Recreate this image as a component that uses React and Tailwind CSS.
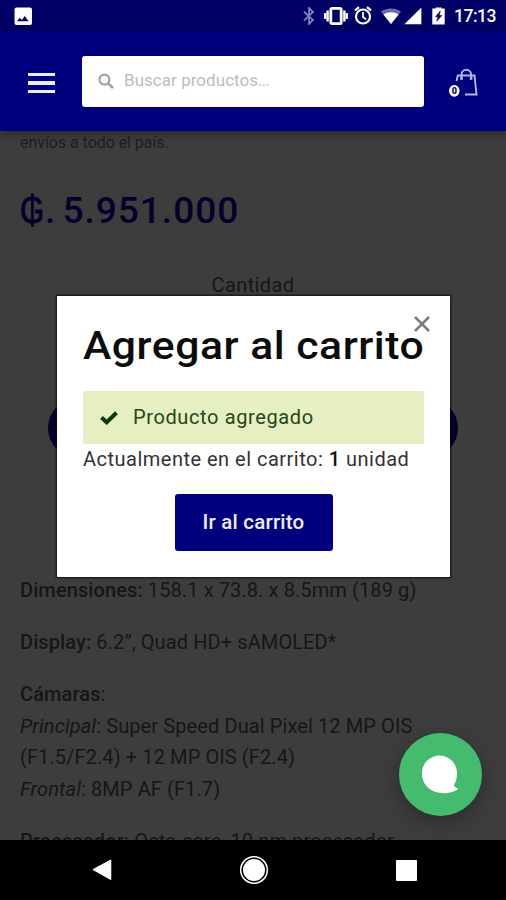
import React from "react";

function StatusBar() {
  return (
    <div className="flex h-[31px] shrink-0 items-center bg-[#000067] pl-[14px] pr-[10px] text-white">
      <svg className="h-[18px] w-[18px]" viewBox="0 0 18 18">
        <rect x="0.5" y="0.5" width="17.5" height="17.5" rx="2" fill="#fff" />
        <path d="M3 14.2 5.8 10.8 7.8 13 10.8 9 14.6 14.2z" fill="#000067" />
      </svg>
      <div className="ml-auto flex items-center">
        <svg className="h-[18px] w-[12px]" viewBox="0 0 12 18" fill="none" stroke="#8080b6" strokeWidth="1.8">
          <path d="M1 4.6 10 13 6 17V1l4 4-9 8.6" />
        </svg>
        <svg className="ml-[9px] h-[18px] w-[24px]" viewBox="0 0 24 18" fill="none" stroke="#fff">
          <rect x="6.8" y="1.4" width="10.4" height="15.2" rx="1.2" strokeWidth="2.8" />
          <path d="M3.6 3.5v11M20.4 3.5v11" strokeWidth="2.4" />
          <path d="M1.2 6v6M22.8 6v6" strokeWidth="2.2" />
        </svg>
        <svg className="ml-[6px] h-[19px] w-[18px]" viewBox="0 0 18 19" fill="none" stroke="#fff">
          <circle cx="9" cy="10.5" r="7" strokeWidth="2.2" />
          <path d="M9 6v5l3.2 2.4" strokeWidth="1.8" />
          <path d="M1 4.4 5 1.2M17 4.4 13 1.2" strokeWidth="2.2" />
        </svg>
        <svg className="ml-[9px] h-[18px] w-[20px]" viewBox="0 0 20 18">
          <path d="M0 4.6C6 .4 14 .4 20 4.6L10 17z" fill="#6c6cac" />
          <path d="M2.4 7.4C7 4.6 13 4.6 17.6 7.4L10 17z" fill="#fff" />
        </svg>
        <svg className="ml-[3px] h-[18px] w-[18px]" viewBox="0 0 18 18">
          <path d="M17.4.5V17.2H.4z" fill="#fff" />
        </svg>
        <svg className="ml-[10px] h-[18px] w-[13px]" viewBox="0 0 13 18">
          <path d="M.3 1.4H3.6V.6h5.800V1.400h3.300v16H.3z" fill="#fff" />
          <path d="M8.300 4 3.600 9.800h2.500L4.600 14.200l5.300-5.800H7.200z" fill="#000067" stroke="#000067" strokeWidth=".6" />
        </svg>
        <span className="ml-[9px] w-[42px] whitespace-nowrap text-[17.5px] font-medium leading-[20px] tracking-[-0.5px]">17:13</span>
      </div>
    </div>
  );
}

function Header() {
  return (
    <header className="relative flex h-[100px] shrink-0 items-center bg-[#00007e] pl-[28px] pr-[27px] shadow-[0_2px_10px_rgba(0,0,0,0.4)]">
      <button className="mt-1 flex w-[27px] flex-col gap-[5px]" aria-label="Menú">
        <span className="h-[3.5px] bg-[#ececff]" />
        <span className="h-[3.5px] bg-[#ececff]" />
        <span className="h-[3.5px] bg-[#ececff]" />
      </button>
      <div className="ml-[27px] flex h-[51px] w-[342px] items-center rounded-[3px] bg-white pl-[16px]">
        <svg className="h-[16px] w-[16px]" viewBox="0 0 16 16" fill="none" stroke="#a4a4a4" strokeWidth="2.2">
          <circle cx="6.4" cy="6.6" r="5" />
          <path d="M10 10.2 15 15" strokeWidth="2.6" />
        </svg>
        <span className="ml-[10px] whitespace-nowrap text-[17px] tracking-[0.04px] text-[#bcbcbc]">Buscar productos…</span>
      </div>
      <svg className="ml-auto mt-[3px] h-[30px] w-[30px]" viewBox="0 0 30 30" fill="none" stroke="#b4b4e6" strokeWidth="1.9">
        <path d="M7.500 13 8.800 7.500H25.500L27.500 26.500H16" />
        <path d="M12.500 11.500V6.500a4.800 4.800 0 0 1 9.600 0v5" />
        <path d="M11.300 10.500h2.600M20.800 10.500h2.600" strokeWidth="2.400" />
        <ellipse cx="5.300" cy="22.800" rx="5.300" ry="5.900" fill="#fff" stroke="none" />
        <text x="5.300" y="26" textAnchor="middle" fontSize="9" fontWeight="900" fill="#00007e" stroke="none">0</text>
      </svg>
    </header>
  );
}

function ProductPage() {
  return (
    <main className="flex h-[709px] shrink-0 flex-col overflow-hidden bg-[#3d3d3d] px-[20px] text-[#161616]">
      <p className="mt-[1px] text-[16px] leading-[22px] tracking-[-0.05px] text-[#1e1e1e]">envíos a todo el país.</p>
      <p className="mt-[34px] whitespace-nowrap text-[37px] font-medium leading-[46px] tracking-[1px] text-[#05002b] [word-spacing:-4px]">
        <span className="inline-block w-[25px] origin-left scale-x-[0.84] [-webkit-text-stroke:1px_#05002b]">₲</span>. 5.951.000
      </p>
      <p className="mt-[36px] text-center text-[20px] leading-[30px] tracking-[0.4px]">Cantidad</p>
      <div className="mx-[28px] mt-[98px] h-[60px] shrink-0 rounded-full bg-[#05002b]" />
      <div className="mt-[64px] h-px shrink-0 bg-[#3a3a3a]" />
      <div className="mt-[52px] whitespace-nowrap text-[20px] leading-[31.5px] tracking-[0.1px]">
        <p><b className="font-medium">Dimensiones:</b> 158.1 x 73.8. x 8.5mm (189 g)</p>
        <p className="mt-[20.5px]"><b className="font-medium">Display:</b> 6.2”, Quad HD+ sAMOLED*</p>
        <p className="mt-[20.5px]"><b className="font-medium">Cámaras</b>:</p>
        <p><i>Principal</i>: Super Speed Dual Pixel 12 MP OIS</p>
        <p>(F1.5/F2.4) + 12 MP OIS (F2.4)</p>
        <p><i>Frontal</i>: 8MP AF (F1.7)</p>
        <p className="mt-[20.5px]"><b className="font-medium">Procesador:</b> Octa-core, 10 nm procesador</p>
      </div>
    </main>
  );
}

function CartDialog() {
  return (
    <div role="dialog" className="absolute left-[57px] top-[296px] flex h-[281px] w-[393px] flex-col bg-white px-[26px] shadow-[0_0_2px_1px_rgba(0,0,0,0.75)]">
      <h1 className="mt-[26px] origin-left scale-x-[1.08] whitespace-nowrap text-[39.5px] font-medium leading-[48px] tracking-[0.5px] text-[#0c0c0c]">Agregar al carrito</h1>
      <div className="mt-[21px] flex h-[53px] items-center rounded-[2px] bg-[#e5efc1] pl-[17px] text-[#27461a]">
        <svg className="h-[14px] w-[18px]" viewBox="0 0 18 14" fill="none" stroke="#083d08" strokeWidth="4">
          <path d="M1.5 6.5 6.7 11.3 16.5 1.8" />
        </svg>
        <span className="-mt-[2px] ml-[15px] whitespace-nowrap text-[20px] tracking-[0.62px]">Producto agregado</span>
      </div>
      <p className="mt-[1px] whitespace-nowrap text-[20px] leading-[28px] tracking-[0.49px] text-[#333]">
        Actualmente en el carrito: <b className="font-medium text-[#111]">1</b> unidad
      </p>
      <button className="mt-[21px] h-[57px] w-[158px] self-center rounded-[3px] bg-[#00007e] text-[20.5px] font-medium tracking-[0.2px] text-[#eeeeff]">Ir al carrito</button>
      <button aria-label="Cerrar" className="absolute left-[357px] top-[20px] h-[16px] w-[16px]">
        <svg viewBox="0 0 16 16" className="h-full w-full" stroke="#7b7b7b" strokeWidth="2.5">
          <path d="M1 1 15 15M15 1 1 15" />
        </svg>
      </button>
    </div>
  );
}

function ChatButton() {
  return (
    <button aria-label="Chat" className="absolute left-[399px] top-[732.5px] h-[83px] w-[83px] rounded-full bg-[#45bb70] shadow-[0_6px_18px_rgba(25,25,35,0.45)]">
      <svg className="h-full w-full" viewBox="0 0 83 83" fill="#fff">
        <path d="M40.5 22.5a17.5 17.5 0 0 1 17.5 18c0 5-1.3 9-3.2 12 1.2 1.8 2.6 2.8 4.8 3.2-3 2.2-8.600 4.500-14.600 4.500C32 60.200 23 52 23 40.500a17.500 17.500 0 0 1 17.500-18z" />
      </svg>
    </button>
  );
}

function NavigationBar() {
  return (
    <nav className="flex h-[60px] shrink-0 items-center bg-black pl-[92px] pr-[89px]">
      <svg className="h-[22px] w-[20px]" viewBox="0 0 20 22">
        <path d="M1 10.600 18.800 1V20.600z" fill="#fff" stroke="#fff" strokeLinejoin="round" />
      </svg>
      <svg className="mx-auto h-[30px] w-[30px]" viewBox="0 0 30 30">
        <circle cx="15" cy="15" r="13.300" fill="none" stroke="#fff" strokeWidth="1.500" />
        <circle cx="15" cy="15" r="11" fill="#fff" />
      </svg>
      <div className="h-[21px] w-[21px] rounded-[1px] bg-white" />
    </nav>
  );
}

export default function App() {
  return (
    <div className="relative flex h-[900px] w-[506px] flex-col overflow-hidden bg-black font-['Roboto',sans-serif]">
      <StatusBar />
      <Header />
      <ProductPage />
      <NavigationBar />
      <CartDialog />
      <ChatButton />
    </div>
  );
}
